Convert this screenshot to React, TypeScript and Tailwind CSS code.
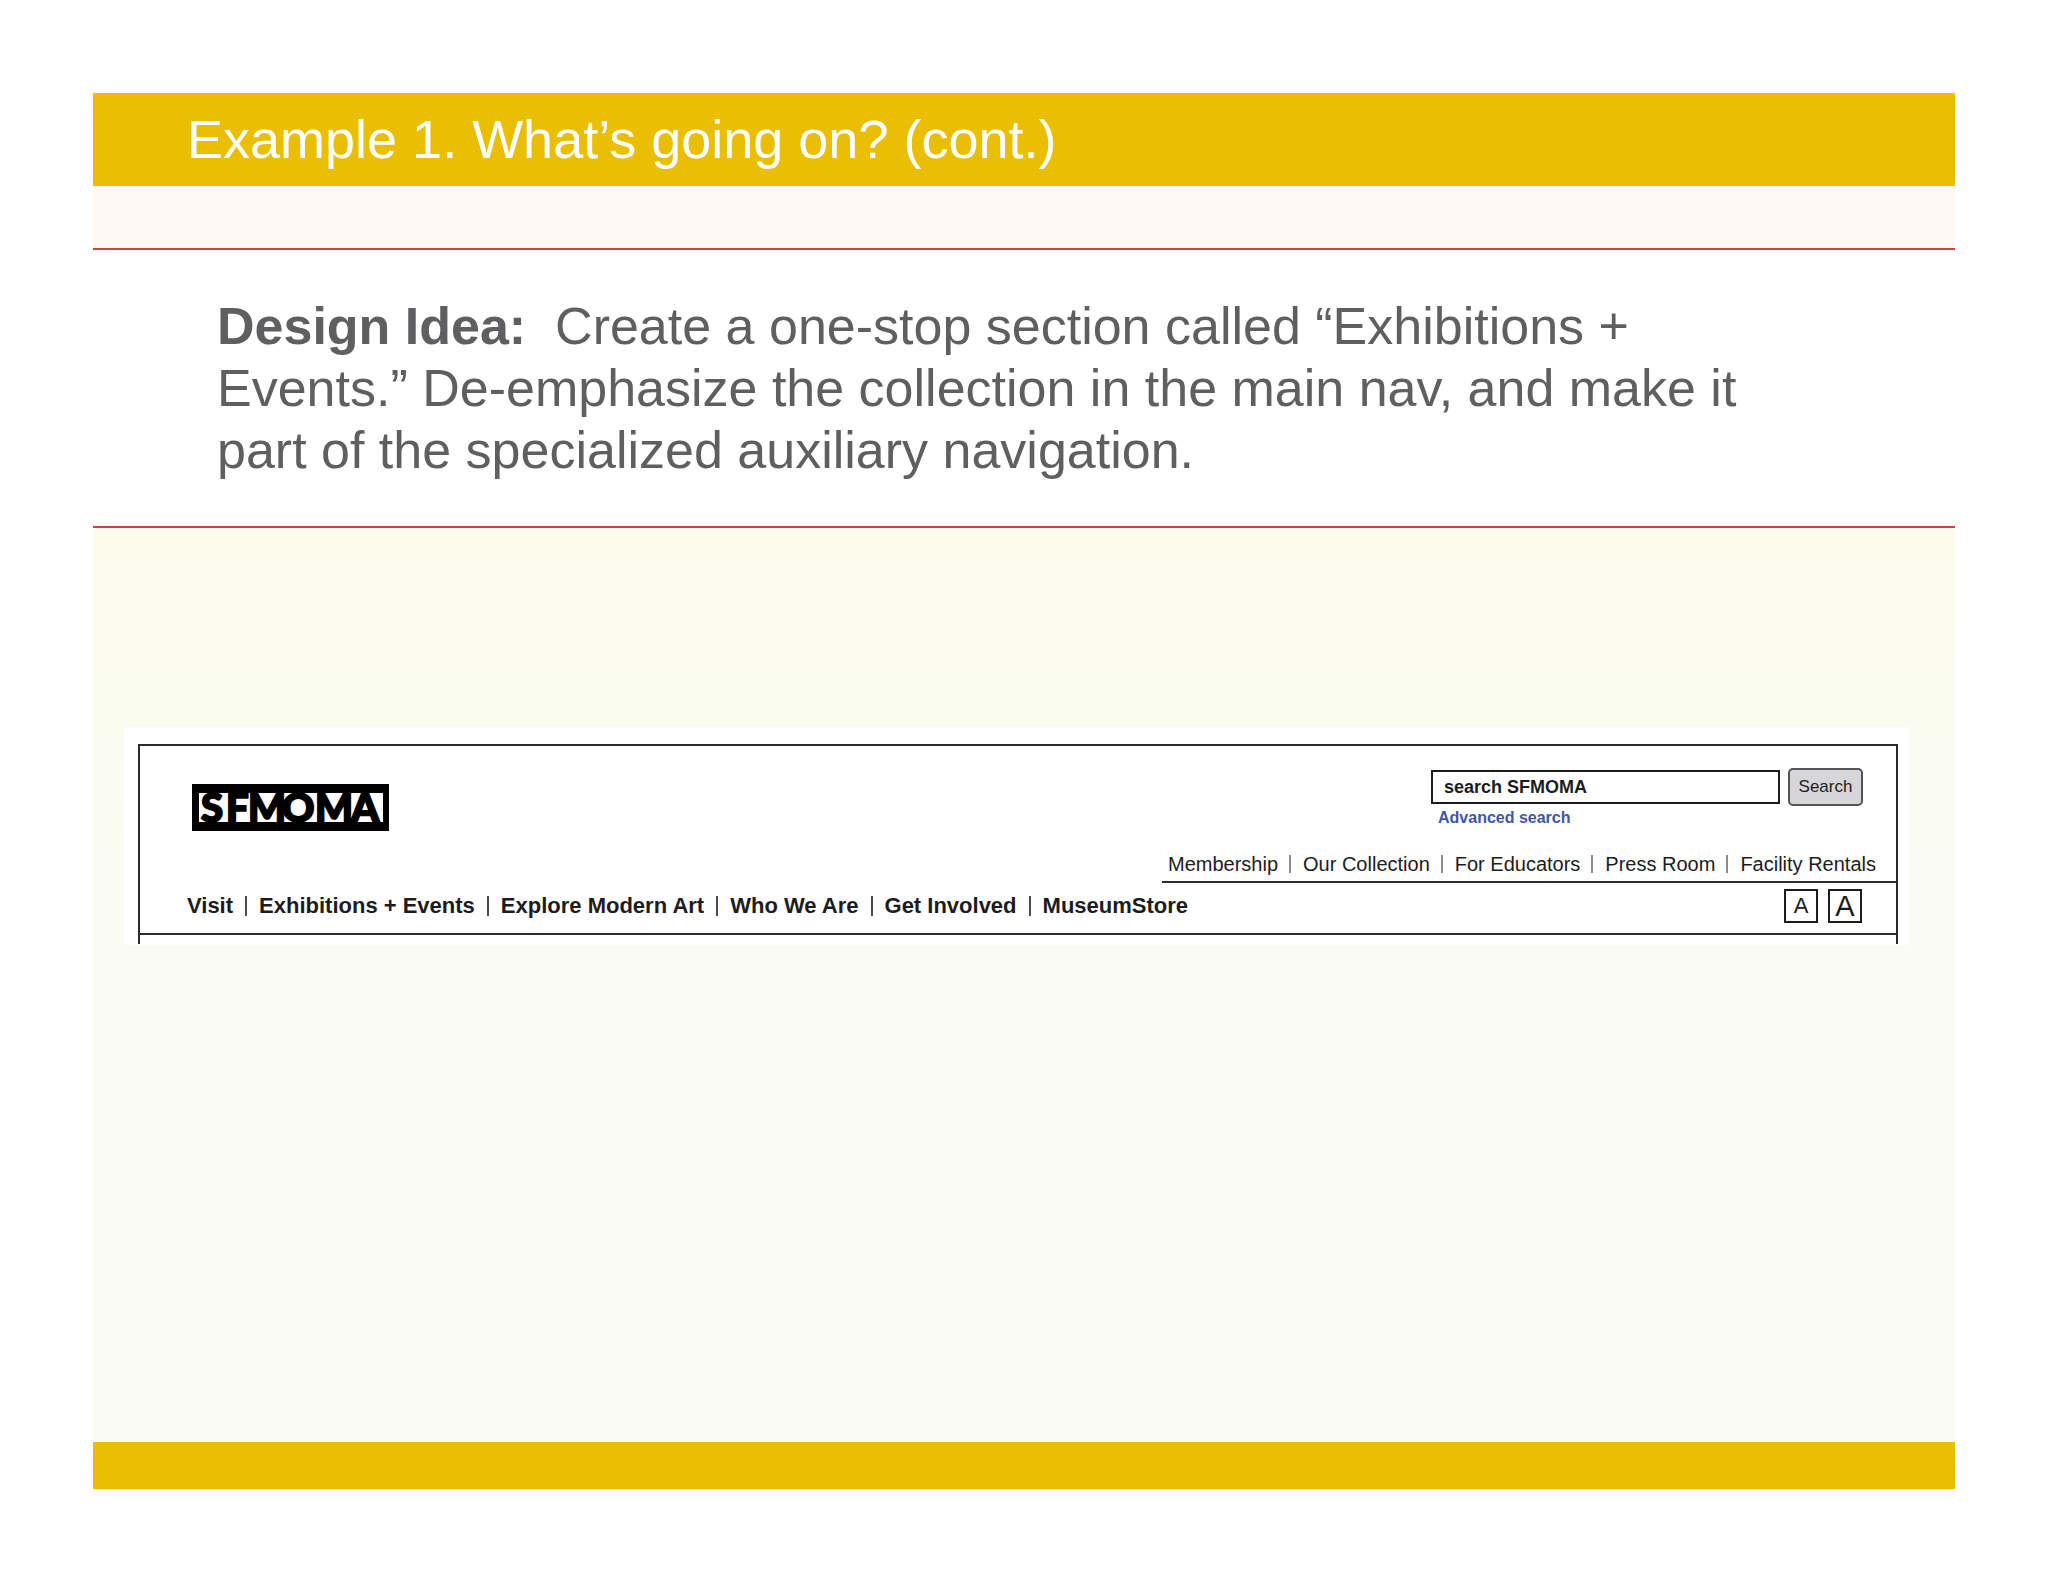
const mainNav = ["Visit", "Exhibitions + Events", "Explore Modern Art", "Who We Are", "Get Involved", "MuseumStore"];
const auxNav = ["Membership", "Our Collection", "For Educators", "Press Room", "Facility Rentals"];

function LinkRow({ items, label, className, bar }: { items: string[]; label: string; className: string; bar: string }) {
  return (
    <nav aria-label={label}>
      <ul className={className}>
        {items.map((item, i) => (
          <li key={item} className="flex items-center whitespace-nowrap">
            {i > 0 && <span aria-hidden="true" className={bar} />}
            <a href="#">{item}</a>
          </li>
        ))}
      </ul>
    </nav>
  );
}

function Logo() {
  return (
    <svg viewBox="0 0 197 47" className="h-[47px] w-[197px]" role="img" aria-label="SFMOMA">
      <rect width="197" height="47" fill="#000" />
      <rect x="7" y="9" width="184" height="29" fill="#fff" />
      <text
        x="9 34 56 90 123 159"
        y="38"
        fontFamily="Lato, sans-serif"
        fontWeight="900"
        fontSize="40"
        fill="#000"
        stroke="#000"
        strokeWidth="2"
      >
        SFMOMA
      </text>
    </svg>
  );
}

export default function App() {
  return (
    <main className="min-h-screen bg-white p-[93px] font-['Liberation_Sans',Arial,sans-serif] text-[#1c1c1e]">
      <header>
        <h1 className="h-[93px] bg-[#eabe02] pl-[94px] text-[54px] leading-[93px] text-white">
          Example 1. What’s going on? (cont.)
        </h1>
        <div className="h-[64px] border-b-2 border-[#cf4045] bg-[#fef9f2]" />
      </header>

      <section className="border-b-2 border-[#cf4045] pt-[45px] pr-[160px] pb-[45px] pl-[124px]">
        <p className="text-[52px] leading-[62px] text-[#5f5f61]">
          <strong>Design Idea:</strong>&nbsp; Create a one-stop section called “Exhibitions +<br />
          Events.” De-emphasize the collection in the main nav, and make it
          <br />
          part of the specialized auxiliary navigation.
        </p>
      </section>

      <section className="h-[914px] bg-linear-to-b from-[#fbfcec] to-[#fafbf3] to-40% pt-[199px] pr-[46px] pl-[31px]">
        <div className="bg-white pt-[17px] pr-[11px] pb-[1px] pl-[14px]">
          <div className="border-2 border-b-0 border-[#2c2c2e]">
            <div className="flex items-start justify-between pt-[22px] pr-[33px] pl-[52px]">
              <div className="pt-[16px]">
                <Logo />
              </div>
              <form className="w-[432px]" onSubmit={(e) => e.preventDefault()}>
                <div className="flex items-center gap-[8px]">
                  <input
                    aria-label="Search SFMOMA"
                    defaultValue="search SFMOMA"
                    className="h-[34px] min-w-0 flex-1 border-2 border-[#1c1c1e] pl-[11px] text-[18px] font-bold"
                  />
                  <button className="h-[38px] w-[75px] rounded-[5px] border-2 border-[#555558] bg-[#d6d6d8] text-[17px]">
                    Search
                  </button>
                </div>
                <a href="#" className="ml-[7px] block text-[16px] leading-[24px] font-bold text-[#3f57a6]">
                  Advanced search
                </a>
              </form>
            </div>
            <div className="mt-[20px] flex justify-end">
              <div className="border-b-2 border-[#2c2c2e] pr-[20px] pb-[4px] pl-[6px]">
                <LinkRow
                  label="Auxiliary"
                  items={auxNav}
                  className="flex text-[20px] leading-[26px]"
                  bar="mr-[12px] ml-[11px] h-[18px] w-[2px] bg-[#8c8c90]"
                />
              </div>
            </div>
            <div className="flex items-start justify-between border-b-2 border-[#2c2c2e] pr-[34px] pb-[10px] pl-[47px]">
              <LinkRow
                label="Main"
                items={mainNav}
                className="flex pt-[7px] text-[22px] leading-[32px] font-bold"
                bar="mx-[12px] h-[20px] w-[2px] bg-[#4c4c50]"
              />
              <div className="flex gap-[10px] pt-[6px]">
                <button aria-label="Normal text" className="h-[34px] w-[34px] border-2 border-[#1c1c1e] text-[22px] leading-[28px]">
                  A
                </button>
                <button aria-label="Large text" className="h-[34px] w-[34px] border-2 border-[#1c1c1e] text-[29px] leading-[30px]">
                  A
                </button>
              </div>
            </div>
            <div className="h-[9px]" />
          </div>
        </div>
      </section>
      <footer className="h-[47px] bg-[#eabe02]" />
    </main>
  );
}
